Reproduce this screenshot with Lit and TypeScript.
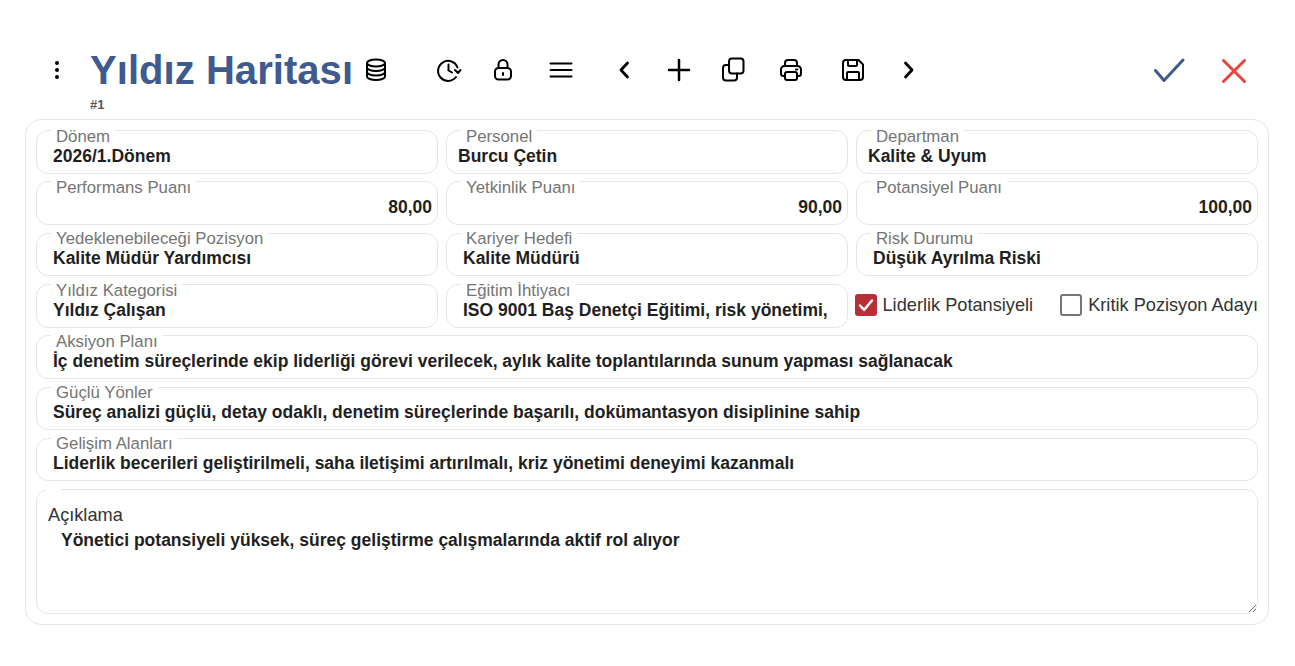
import { LitElement, css, html, svg } from 'lit';
import { customElement } from 'lit/decorators.js';

// left = distance from the previous icon's box
const tools = [
  { left: 11, name: 'database', body: svg`<ellipse cx="12" cy="5" rx="9" ry="3.500"/><path d="M3 5v13.500c0 1.900 4 3.500 9 3.500s9-1.600 9-3.500V5"/><path d="M3 9.500c0 1.900 4 3.500 9 3.500s9-1.600 9-3.500"/><path d="M3 14c0 1.900 4 3.500 9 3.500s9-1.600 9-3.500"/>` },
  { left: 49, name: 'history', body: svg`<path d="M20.500 9.500A10 10 0 1 0 19 19"/><path d="M11.500 6.500v6l3.500 2"/><path d="M18 12l3 3 2.500-3"/>` },
  { left: 30, name: 'lock', body: svg`<rect x="4" y="10" width="16" height="11.500" rx="3.500"/><path d="M7.500 10V6.500a4.500 4.500 0 0 1 9 0V10"/><path d="M12 15v2"/>` },
  { left: 34, name: 'menu', body: svg`<path d="M1.500 5.500h21M1.500 12h21M1.500 18.500h21"/>` },
  { left: 39, name: 'prev', body: svg`<path d="M15.500 5l-6.500 7 6.500 7" stroke-width="2.800"/>` },
  { left: 31, name: 'add', body: svg`<path d="M12 2v20M2 12h20" stroke-width="2.500"/>` },
  { left: 30, name: 'copy', body: svg`<rect x="8" y="0.500" width="14.500" height="15" rx="3"/><path d="M8 7H5a3 3 0 0 0-3 3v9.500a3 3 0 0 0 3 3h8a3 3 0 0 0 3-3v-4"/>` },
  { left: 34, name: 'print', body: svg`<path d="M6 8V5a3 3 0 0 1 3-3h6a3 3 0 0 1 3 3v3"/><path d="M6 18H4.500A2.500 2.500 0 0 1 2 15.500v-4A3.500 3.500 0 0 1 5.500 8h13a3.500 3.500 0 0 1 3.500 3.500v4a2.500 2.500 0 0 1-2.500 2.500H18"/><rect x="6" y="14" width="12" height="8" rx="2"/><path d="M17 11.500h1.500"/>` },
  { left: 38, name: 'save', body: svg`<path d="M2 5a3 3 0 0 1 3-3h12.500L22 6.500V19a3 3 0 0 1-3 3H5a3 3 0 0 1-3-3z"/><path d="M7 2v5a1 1 0 0 0 1 1h7a1 1 0 0 0 1-1V2"/><path d="M6 22v-7a1 1 0 0 1 1-1h10a1 1 0 0 1 1 1v7"/>` },
  { left: 32, name: 'next', body: svg`<path d="M8.500 5l6.500 7-6.500 7" stroke-width="2.800"/>` },
];

type Field = { label: string; value: string; align?: string; inset?: number };

const rows: Field[] = [
  { label: 'Dönem', value: '2026/1.Dönem', inset: 17 },
  { label: 'Personel', value: 'Burcu Çetin', inset: 12 },
  { label: 'Departman', value: 'Kalite & Uyum', inset: 12 },
  { label: 'Performans Puanı', value: '80,00', align: 'end' },
  { label: 'Yetkinlik Puanı', value: '90,00', align: 'end' },
  { label: 'Potansiyel Puanı', value: '100,00', align: 'end' },
  { label: 'Yedeklenebileceği Pozisyon', value: 'Kalite Müdür Yardımcısı', inset: 17 },
  { label: 'Kariyer Hedefi', value: 'Kalite Müdürü', inset: 17 },
  { label: 'Risk Durumu', value: 'Düşük Ayrılma Riski', inset: 17 },
  { label: 'Yıldız Kategorisi', value: 'Yıldız Çalışan', inset: 17 },
  { label: 'Eğitim İhtiyacı', value: 'ISO 9001 Baş Denetçi Eğitimi, risk yönetimi,', inset: 17 },
];

const wide: Field[] = [
  { label: 'Aksiyon Planı', value: 'İç denetim süreçlerinde ekip liderliği görevi verilecek, aylık kalite toplantılarında sunum yapması sağlanacak', inset: 17 },
  { label: 'Güçlü Yönler', value: 'Süreç analizi güçlü, detay odaklı, denetim süreçlerinde başarılı, dokümantasyon disiplinine sahip', inset: 17 },
  { label: 'Gelişim Alanları', value: 'Liderlik becerileri geliştirilmeli, saha iletişimi artırılmalı, kriz yönetimi deneyimi kazanmalı', inset: 17 },
];

@customElement('app-root')
export class AppRoot extends LitElement {
  static styles = css`
    :host {
      display: block;
      font-family: 'Liberation Sans', Arial, sans-serif;
      background: #fff;
      color: #1f1f1f;
      padding: 46px 26px 0 25px;
      height: 620px;
      overflow: hidden;
    }

    .top {
      display: flex;
      align-items: center;
      height: 48px;
    }

    .dots {
      width: 24px;
      height: 24px;
      margin-left: 20px;
      flex: none;
    }

    .title {
      margin: 0 0 0 21px;
      font-size: 40px;
      font-weight: 700;
      line-height: 48px;
      color: #3f5a8e;
      white-space: nowrap;
      letter-spacing: 0.050px;
    }

    .tools {
      display: flex;
      align-items: center;
      flex: 1;
    }

    .tool {
      width: 24px;
      height: 24px;
      flex: none;
      fill: none;
      stroke: #000;
      stroke-width: 2;
      stroke-linecap: round;
      stroke-linejoin: round;
      overflow: visible;
    }

    .actions {
      display: flex;
      align-items: center;
      gap: 30px;
      margin-right: 17px;
    }

    .actions svg {
      width: 36px;
      height: 36px;
      display: block;
      fill: none;
      stroke-width: 3;
      stroke-linecap: round;
      stroke-linejoin: round;
    }

    .ok { stroke: #3f5a8e; }
    .cancel { stroke: #e8453c; }

    .sub {
      margin-left: 65px;
      font-size: 13px;
      font-weight: 700;
      line-height: 15px;
      height: 25px;
      padding-top: 3px;
      box-sizing: border-box;
      color: #555;
    }

    .card {
      border: 1px solid #e6e6e6;
      border-radius: 16px;
      padding: 10.200px 10px 10px;
      height: 506px;
      box-sizing: border-box;
      display: flex;
      flex-direction: column;
      gap: 7.700px;
    }

    .grid {
      display: grid;
      grid-template-columns: repeat(3, 402px);
      grid-auto-rows: 43.600px;
      gap: 7.700px 8px;
    }

    .field {
      position: relative;
      border: 1px solid #e6e6e6;
      border-radius: 12px;
      box-sizing: border-box;
      height: 43.600px;
      display: flex;
      align-items: flex-end;
      padding: 0 5px 7px 0;
      min-width: 0;
    }

    .field.end { justify-content: flex-end; }

    .field label {
      position: absolute;
      left: 14px;
      top: -1.400px;
      padding: 0 5px;
      background: #fff;
      font-size: 16.800px;
      line-height: 13px;
      color: #757575;
      white-space: nowrap;
    }

    .value {
      font-size: 17.500px;
      font-weight: 700;
      line-height: 20px;
      white-space: nowrap;
      overflow: hidden;
    }

    .checks {
      display: flex;
      align-items: center;
      justify-content: space-between;
      font-size: 18.200px;
      color: #333;
      margin-left: -1.500px;
      padding-bottom: 2px;
      white-space: nowrap;
    }

    .check {
      display: flex;
      align-items: center;
      gap: 6px;
    }

    .check-text {
      position: relative;
      top: 1px;
    }

    .box {
      width: 22px;
      height: 22px;
      border-radius: 3px;
      box-sizing: border-box;
      border: 2px solid #757575;
      display: block;
      flex: none;
    }

    .box.on {
      background: #b92f37;
      border: none;
    }

    .box svg {
      display: block;
      width: 22px;
      height: 22px;
      fill: none;
      stroke: #fff;
      stroke-width: 2.500;
      stroke-linecap: round;
      stroke-linejoin: round;
    }

    .note {
      position: relative;
      height: 124.700px;
    }

    .note textarea {
      display: block;
      width: 100%;
      height: 100%;
      box-sizing: border-box;
      border: 1px solid #e6e6e6;
      border-radius: 12px;
      outline: none;
      resize: vertical;
      padding: 40px 24px 0;
      font: 700 17.500px/20px 'Liberation Sans', Arial, sans-serif;
      color: #1f1f1f;
      background: #fff;
    }

    .note label {
      position: absolute;
      left: 12px;
      top: 16px;
      font-size: 18.200px;
      line-height: 20px;
      color: #333;
    }

    .notch {
      position: absolute;
      left: 10px;
      top: 0;
      width: 15px;
      height: 1px;
      background: #fff;
    }
  `;

  private renderField(f: Field) {
    const inset = f.inset ? `margin-left:${f.inset - 1}px` : '';
    return html`
      <div class="field ${f.align === 'end' ? 'end' : ''}">
        <label>${f.label}</label>
        <span class="value" style=${inset}>${f.value}</span>
      </div>
    `;
  }

  render() {
    return html`
      <div class="top">
        <svg class="dots" viewBox="0 0 24 24" fill="#000">
          <circle cx="12" cy="5" r="2"/><circle cx="12" cy="12" r="2"/><circle cx="12" cy="19" r="2"/>
        </svg>
        <h1 class="title">Yıldız Haritası</h1>
        <div class="tools">
          ${tools.map(t => html`
            <svg class="tool" style="margin-left:${t.left}px" viewBox="0 0 24 24" aria-label=${t.name}>${t.body}</svg>
          `)}
        </div>
        <div class="actions">
          <svg class="ok" viewBox="0 0 36 36"><path d="M5.500 18.500L14 28.500 33 8"/></svg>
          <svg class="cancel" viewBox="0 0 36 36"><path d="M7.500 8.500l21 21M28.500 8.500l-21 21"/></svg>
        </div>
      </div>
      <div class="sub">#1</div>
      <div class="card">
        <div class="grid">
          ${rows.map(f => this.renderField(f))}
          <div class="checks">
            <span class="check">
              <span class="box on"><svg viewBox="0 0 22 22"><path d="M5 11.500l4.200 4.300L17 6.500"/></svg></span>
              <span class="check-text">Liderlik Potansiyeli</span>
            </span>
            <span class="check"><span class="box"></span><span class="check-text">Kritik Pozisyon Adayı</span></span>
          </div>
        </div>
        ${wide.map(f => this.renderField(f))}
        <div class="note">
          <textarea .value=${'Yönetici potansiyeli yüksek, süreç geliştirme çalışmalarında aktif rol alıyor'}></textarea>
          <span class="notch"></span>
          <label>Açıklama</label>
        </div>
      </div>
    `;
  }
}
